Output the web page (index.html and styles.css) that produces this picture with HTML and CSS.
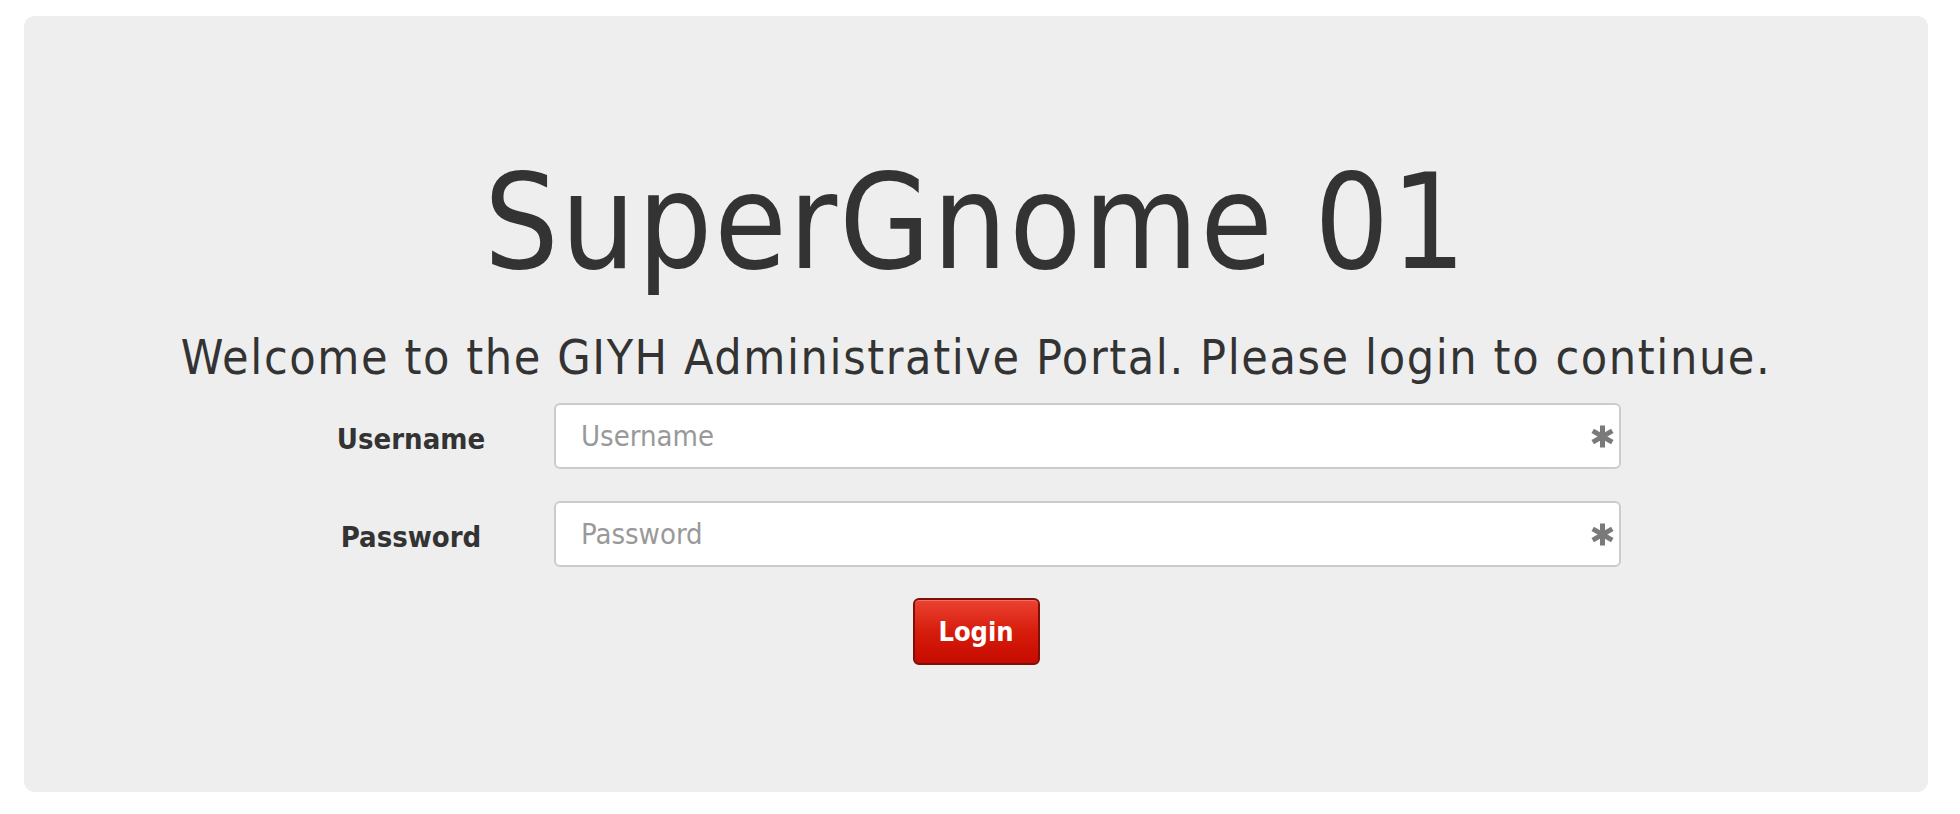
FILE: index.html
```html
<!DOCTYPE html>
<html lang="en">
<head>
<meta charset="utf-8">
<title>SuperGnome 01</title>
<link rel="stylesheet" href="styles.css">
</head>
<body>
<div class="panel">
  <h1 class="title">SuperGnome 01</h1>
  <p class="lead">Welcome to the GIYH Administrative Portal. Please login to continue.</p>
  <form class="form">
    <div class="row">
      <label class="label" for="u">Username</label>
      <div class="field">
        <input class="input" id="u" type="text" placeholder="Username">
        <svg class="req" viewBox="0 0 24 24" aria-hidden="true"><g stroke="#7a7a7a" stroke-width="5.2" stroke-linecap="butt"><line x1="12" y1="0.5" x2="12" y2="23.5"/><line x1="1.8" y1="6.2" x2="22.2" y2="17.8"/><line x1="1.8" y1="17.8" x2="22.2" y2="6.2"/></g></svg>
      </div>
    </div>
    <div class="row">
      <label class="label" for="p">Password</label>
      <div class="field">
        <input class="input" id="p" type="password" placeholder="Password">
        <svg class="req" viewBox="0 0 24 24" aria-hidden="true"><g stroke="#7a7a7a" stroke-width="5.2" stroke-linecap="butt"><line x1="12" y1="0.5" x2="12" y2="23.5"/><line x1="1.8" y1="6.2" x2="22.2" y2="17.8"/><line x1="1.8" y1="17.8" x2="22.2" y2="6.2"/></g></svg>
      </div>
    </div>
    <div class="actions">
      <button class="btn" type="button">Login</button>
    </div>
  </form>
</div>
</body>
</html>
```
FILE: styles.css
```css
html, body {
  margin: 0;
  padding: 0;
  background: #ffffff;
}
body {
  font-family: "DejaVu Sans Condensed", "DejaVu Sans", sans-serif;
  font-stretch: condensed;
  color: #333333;
}
.panel {
  margin: 16px 32px 0 24px;
  height: 776px;
  box-sizing: border-box;
  background: #eeeeee;
  border-radius: 11px;
  padding-top: 142px;
}
.title {
  margin: 0;
  font-size: 131px;
  line-height: 130px;
  font-weight: normal;
  text-align: center;
  letter-spacing: 2px;
}
.lead {
  margin: 45px 0 0;
  font-size: 48px;
  line-height: 48px;
  text-align: center;
  letter-spacing: 1.6px;
}
.form {
  margin-top: 22px;
}
.row {
  display: flex;
  align-items: center;
  margin-bottom: 32px;
}
.label {
  width: 230px;
  margin-left: 272px;
  margin-right: 28px;
  padding-top: 6px;
  text-align: center;
  font-weight: bold;
  font-size: 29px;
  line-height: 34px;
}
.field {
  position: relative;
  width: 1067px;
  height: 66px;
}
.input {
  display: block;
  box-sizing: border-box;
  width: 100%;
  height: 66px;
  margin: 0;
  padding: 0 60px 0 25px;
  border: 2px solid #cccccc;
  border-radius: 6px;
  background: #ffffff;
  font-family: "DejaVu Sans Condensed", "DejaVu Sans", sans-serif;
  font-stretch: condensed;
  font-size: 29px;
  color: #333333;
  outline: none;
}
.input::placeholder {
  color: #999999;
}
.req {
  position: absolute;
  right: 7px;
  top: 22px;
  width: 23px;
  height: 23px;
  filter: blur(0.6px);
}
.actions {
  display: flex;
  justify-content: center;
  margin-top: -1px;
}
.btn {
  box-sizing: border-box;
  width: 127px;
  height: 67px;
  padding: 0;
  border: 2px solid #7d1109;
  border-radius: 6px;
  background: linear-gradient(#ec4232, #d61d0c 50%, #c60a00);
  box-shadow: inset 0 1px 0 rgba(255, 255, 255, 0.25);
  color: #ffffff;
  font-family: "DejaVu Sans Condensed", "DejaVu Sans", sans-serif;
  font-stretch: condensed;
  font-weight: bold;
  font-size: 27px;
  cursor: pointer;
}
```
